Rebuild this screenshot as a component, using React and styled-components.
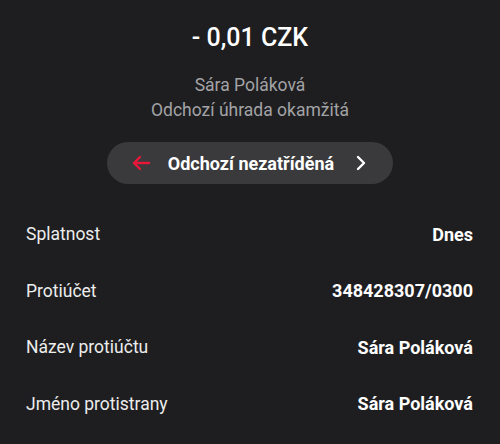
import React from "react";
import styled, { createGlobalStyle } from "styled-components";

const GlobalStyle = createGlobalStyle`
  html, body {
    margin: 0;
    padding: 0;
    background: #1e1e20;
  }
  body {
    font-family: Roboto, "Liberation Sans", sans-serif;
    color: #fff;
  }
`;

const details = [
  { label: "Splatnost", value: "Dnes" },
  { label: "Protiúčet", value: "348428307/0300" },
  { label: "Název protiúčtu", value: "Sára Poláková" },
  { label: "Jméno protistrany", value: "Sára Poláková" },
];

export default function App() {
  return (
    <>
      <GlobalStyle />
      <Screen>
        <Header>
          <Amount>- 0,01 CZK</Amount>
          <Sub>Sára Poláková</Sub>
          <Sub>Odchozí úhrada okamžitá</Sub>
        </Header>
        <Category>
          <svg width="20" height="16" viewBox="0 0 20 16">
            <path
              d="M18 8H3M9 2L3 8l6 6"
              fill="none"
              stroke="#e8173a"
              strokeWidth="2.4"
              strokeLinecap="round"
              strokeLinejoin="round"
            />
          </svg>
          <CategoryName>Odchozí nezatříděná</CategoryName>
          <svg width="12" height="16" viewBox="0 0 12 16">
            <path
              d="M3 2l6 6-6 6"
              fill="none"
              stroke="#fff"
              strokeWidth="2.4"
              strokeLinecap="round"
              strokeLinejoin="round"
            />
          </svg>
        </Category>
        <List>
          {details.map((d) => (
            <Row key={d.label}>
              <Label>{d.label}</Label>
              <Value>{d.value}</Value>
            </Row>
          ))}
        </List>
      </Screen>
    </>
  );
}

const Screen = styled.div`
  width: 500px;
  height: 444px;
  overflow: hidden;
  background: #1e1e20;
`;

const Header = styled.div`
  display: flex;
  flex-direction: column;
  align-items: center;
  padding-top: 22px;
`;

const Amount = styled.div`
  font-size: 25px;
  line-height: 32px;
  font-weight: 500;
  color: #fff;
  margin-bottom: 19px;
`;

const Sub = styled.div`
  font-size: 17.5px;
  line-height: 25px;
  color: #a3a3a6;
`;

const Category = styled.div`
  margin: 19px auto 0;
  width: 286px;
  height: 42px;
  box-sizing: border-box;
  border-radius: 21px;
  background: #3a3a3c;
  display: flex;
  align-items: center;
  padding: 0 26px 0 24px;
  svg {
    flex: none;
  }
`;

const CategoryName = styled.span`
  flex: 1;
  text-align: center;
  font-size: 18px;
  font-weight: 700;
  color: #fff;
  padding-right: 4px;
`;

const List = styled.div`
  display: flex;
  flex-direction: column;
  padding: 22px 27px 0 26px;
`;

const Row = styled.div`
  display: flex;
  justify-content: space-between;
  align-items: center;
  height: 56.5px;
  font-size: 17.5px;
`;

const Label = styled.span`
  color: #ededed;
`;

const Value = styled.span`
  font-weight: 700;
  font-size: 18px;
  color: #fff;
`;
